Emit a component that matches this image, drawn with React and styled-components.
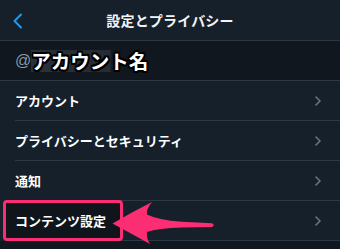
import React from 'react';
import styled, { createGlobalStyle } from 'styled-components';

const GlobalStyle = createGlobalStyle`
  html, body {
    margin: 0;
    padding: 0;
    background-color: #10171e;
  }
  body {
    font-family: "Noto Sans CJK JP", "Noto Sans", "Liberation Sans", sans-serif;
    -webkit-font-smoothing: antialiased;
  }
`;

const items = ['アカウント', 'プライバシーとセキュリティ', '通知', 'コンテンツ設定'];

const Chevron = ({ color = '#6e767d', size = 10, width = 1.6 }) => (
  <svg width={size * 0.6} height={size} viewBox="0 0 6 10" fill="none">
    <path d="M1 1l4 4-4 4" stroke={color} strokeWidth={width} strokeLinecap="round" strokeLinejoin="round" />
  </svg>
);

const BackIcon = () => (
  <svg width="11" height="16" viewBox="0 0 11 16" fill="none">
    <path d="M9 1.5L2.5 8 9 14.5" stroke="#1d9bf0" strokeWidth="2" strokeLinecap="round" strokeLinejoin="round" />
  </svg>
);

const Arrow = () => (
  <ArrowSvg width="106" height="46" viewBox="0 0 106 46">
    <path
      d="M2.5 23.5 Q22 12 42 2 Q36 9 37 14.5 Q48 20 72 21.8 L102 23.2 Q105.5 25.1 102 27 L72 27.6 Q48 28.5 37 32 Q36 38 40 44 Q22 34 2.5 23.5 Z"
      fill="#fb2d73"
    />
  </ArrowSvg>
);

const App = () => {
  return (
    <>
      <GlobalStyle />
      <Screen>
        <Header>
          <BackBtn>
            <BackIcon />
          </BackBtn>
          <Title>設定とプライバシー</Title>
          <span />
        </Header>
        <AccountBar>
          <At>@</At>
          <AccountName>アカウント名</AccountName>
        </AccountBar>
        <List>
          {items.map((label, i) => (
            <Row key={label}>
              {i === items.length - 1 ? (
                <Highlight>{label}</Highlight>
              ) : (
                <Label>{label}</Label>
              )}
              <ChevronWrap>
                <Chevron />
              </ChevronWrap>
            </Row>
          ))}
        </List>
        <Arrow />
      </Screen>
    </>
  );
};

const Screen = styled.div`
  position: relative;
  width: 340px;
  height: 249px;
  overflow: hidden;
  background-color: #10171e;
`;

const Header = styled.div`
  height: 40px;
  display: grid;
  grid-template-columns: 40px 1fr 40px;
  align-items: center;
  background-color: #15202b;
  border-bottom: 1px solid #2c3844;
`;

const BackBtn = styled.div`
  display: flex;
  align-items: center;
  padding-left: 12px;
  padding-top: 1px;
`;

const Title = styled.div`
  text-align: center;
  color: #f2f4f5;
  font-size: 14px;
  font-weight: 700;
  letter-spacing: 0.2px;
`;

const AccountBar = styled.div`
  height: 39px;
  display: flex;
  align-items: center;
  padding-left: 15px;
  background-color: #10171e;
  border-bottom: 1px solid #2c3844;
`;

const At = styled.span`
  color: #8899a6;
  font-family: "Liberation Sans", sans-serif;
  font-size: 16px;
`;

const AccountName = styled.span`
  color: #fff;
  font-size: 19.5px;
  font-weight: 700;
  line-height: 22px;
  padding-right: 2px;
  background: linear-gradient(90deg, rgba(110, 116, 124, 0.28) 0%, rgba(110, 116, 124, 0.22) 66%, transparent 68%);
  text-shadow:
    -1.6px -1.6px 0 #000, 1.6px -1.6px 0 #000, -1.6px 1.6px 0 #000, 1.6px 1.6px 0 #000,
    0 -2px 0 #000, 0 2px 0 #000, -2px 0 0 #000, 2px 0 0 #000;
`;

const List = styled.div`
  background-color: #15202b;
`;

const Row = styled.div`
  height: 39px;
  margin-left: 15px;
  padding-right: 19px;
  display: flex;
  align-items: center;
  justify-content: space-between;
  border-bottom: 1px solid #2c3844;
  isolation: isolate;
`;

const Label = styled.span`
  color: #fff;
  font-size: 13px;
  font-weight: 700;
`;

const Highlight = styled(Label)`
  position: relative;
  &::before {
    content: '';
    position: absolute;
    top: -11px;
    bottom: -11px;
    left: -12px;
    right: -17px;
    border: 3.5px solid #fb2d73;
    border-radius: 4px;
    background-color: #0f151b;
    z-index: -1;
  }
`;

const ChevronWrap = styled.span`
  display: flex;
  align-items: center;
  padding-top: 1px;
`;

const ArrowSvg = styled.svg`
  position: absolute;
  left: 110px;
  top: 200px;
`;

export default App;
